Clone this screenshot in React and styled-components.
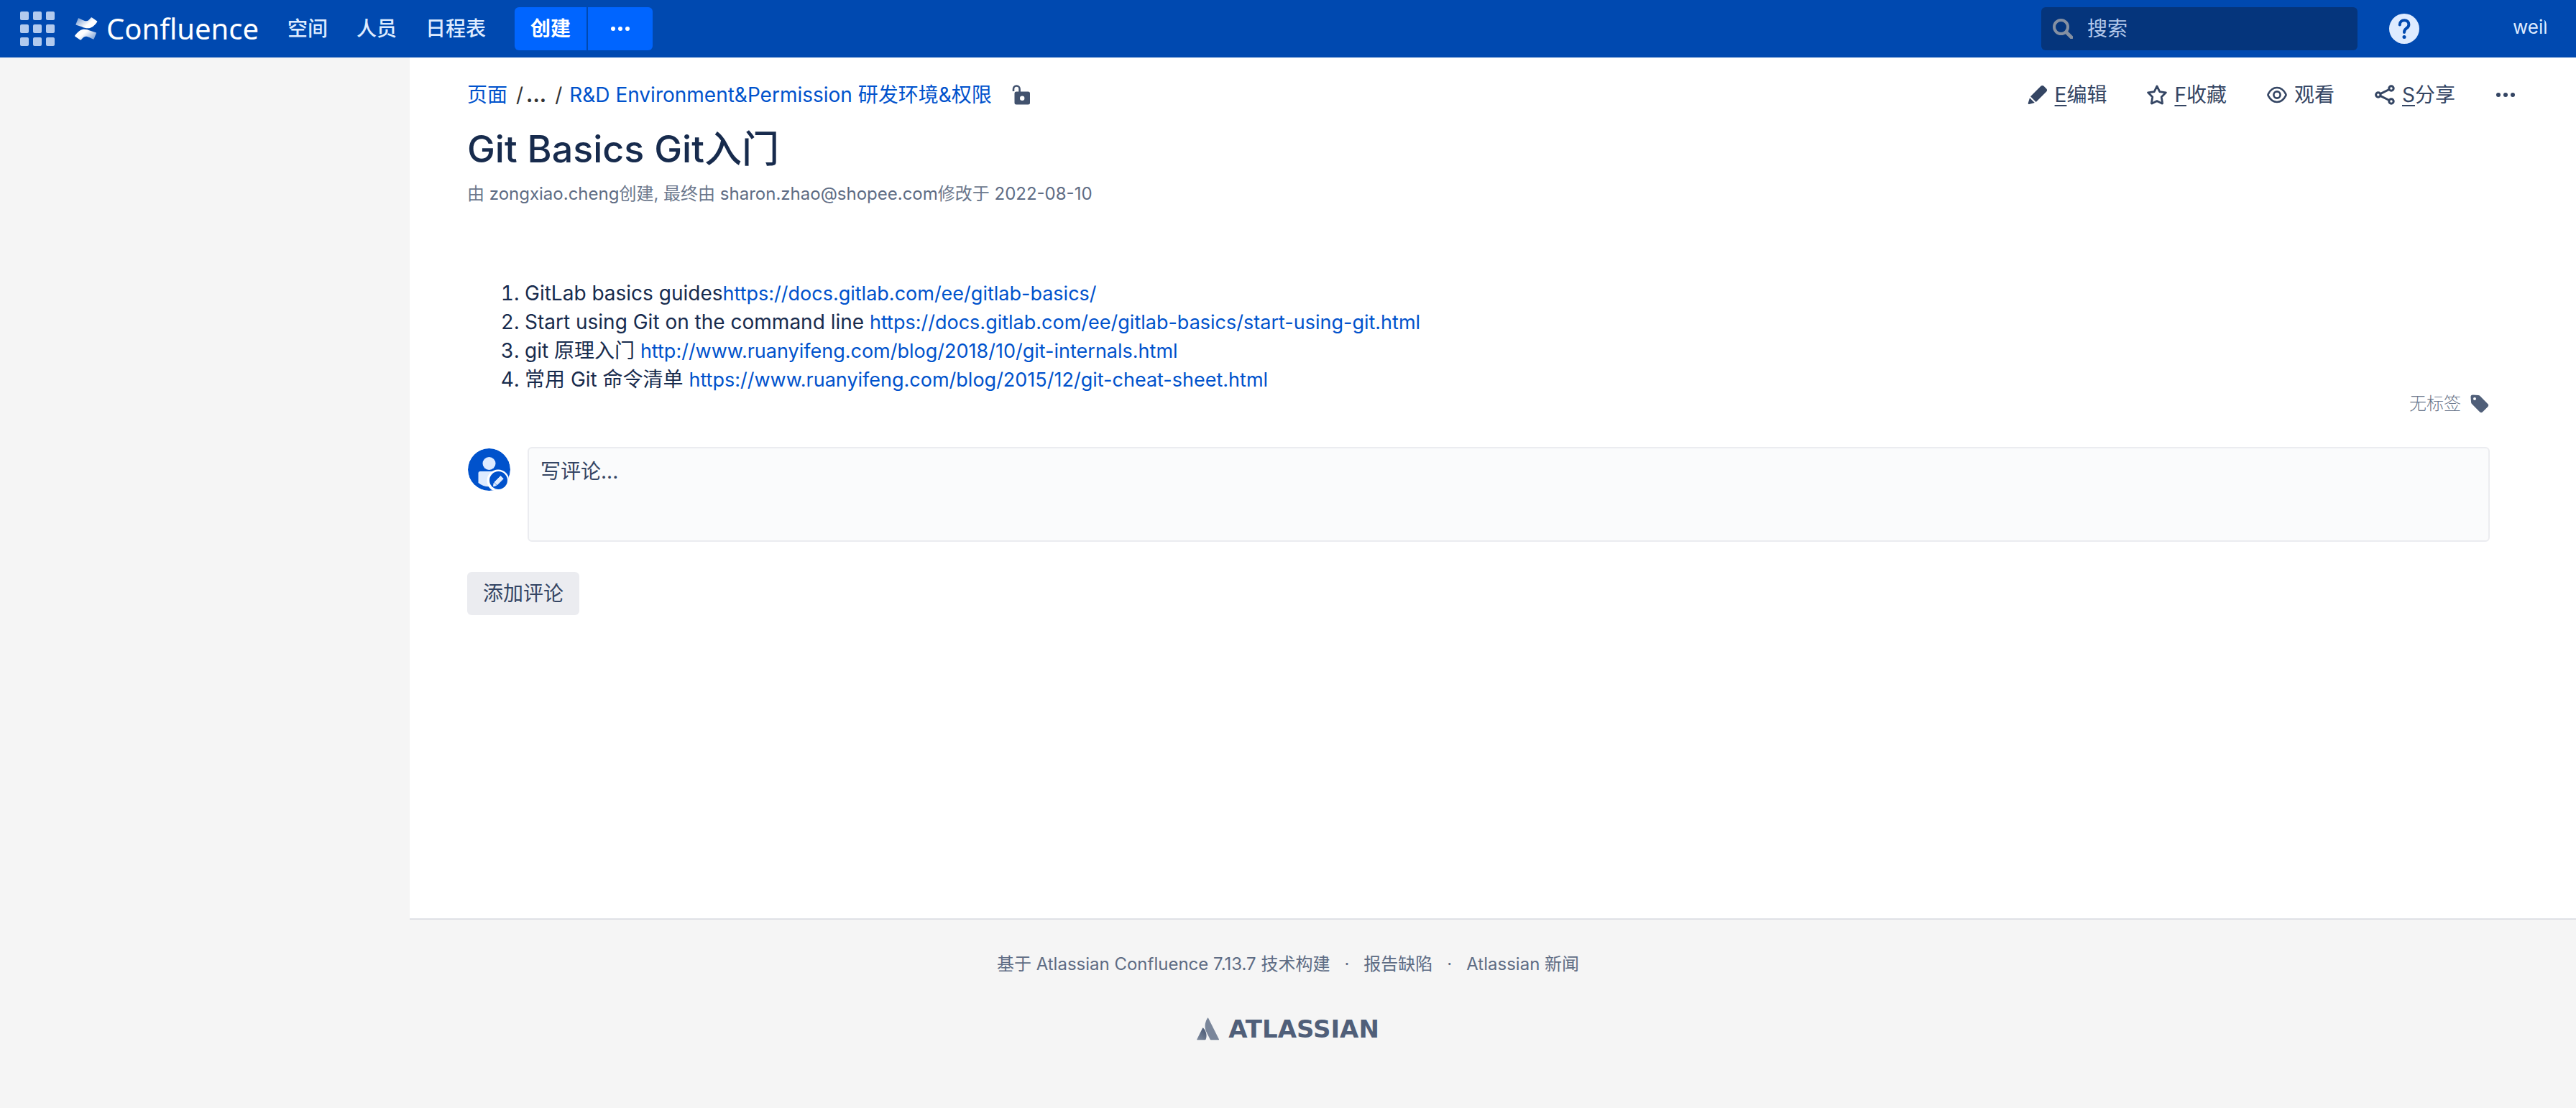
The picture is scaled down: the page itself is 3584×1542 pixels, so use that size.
import React from 'react';
import styled, { createGlobalStyle } from 'styled-components';

const sans = 'Inter, "Noto Sans CJK SC", sans-serif';

const GlobalStyle = createGlobalStyle`
  * { box-sizing: border-box; }
  html, body, #root { height: 100%; }
  body {
    margin: 0;
    background: #f5f5f5;
    color: #172b4d;
    font-family: ${sans};
    font-size: 28px;
    line-height: 40px;
  }
  a { color: #0052cc; text-decoration: none; }
  button, input, textarea { font: inherit; }
  button { cursor: pointer; }
  svg { display: block; flex: none; }
`;

const Page = styled.div`
  display: flex;
  flex-direction: column;
  min-height: 100%;
`;

const Header = styled.header`
  display: flex;
  align-items: center;
  height: 80px;
  flex: none;
  padding: 0 40px 0 28px;
  background: #0049b0;
  color: #deebff;
`;

const AppSwitcher = styled.button`
  display: grid;
  grid-template-columns: repeat(3, 12px);
  gap: 6px;
  padding: 0;
  border: 0;
  background: none;
`;

const Dot = styled.span`
  height: 12px;
  border-radius: 2px;
  background: #b2caee;
`;

const Logo = styled.a`
  display: flex;
  align-items: center;
  gap: 12px;
  margin-left: 28px;
  && { color: #fff; }
  font-family: "Noto Sans", sans-serif;
  font-size: 40px;
`;

const Nav = styled.nav`
  display: flex;
  gap: 40px;
  margin: 0 40px;
  a { color: #deebff; font-weight: 500; }
`;

const CreateGroup = styled.div`
  display: flex;
  gap: 2px;
`;

const CreateButton = styled.button`
  display: flex;
  align-items: center;
  justify-content: center;
  height: 60px;
  width: ${(p) => (p.$more ? '90px' : '100px')};
  padding: 0;
  border: 0;
  border-radius: ${(p) => (p.$more ? '0 6px 6px 0' : '6px 0 0 6px')};
  background: #0065ff;
  color: #fff;
  font-weight: 700;
`;

const Search = styled.label`
  display: flex;
  align-items: center;
  gap: 20px;
  width: 440px;
  height: 60px;
  margin-left: auto;
  padding: 0 16px;
  border-radius: 6px;
  background: #05357c;
  input {
    flex: 1;
    min-width: 0;
    padding: 0;
    border: 0;
    outline: 0;
    background: none;
    color: #b3cbef;
  }
  input::placeholder { color: #b3c8ea; opacity: 1; }
`;

const HelpButton = styled.button`
  margin-left: 44px;
  padding: 0;
  border: 0;
  background: none;
`;

const Profile = styled.a`
  width: 48px;
  height: 48px;
  margin-left: 130px;
  border-radius: 50%;
  overflow: hidden;
  white-space: nowrap;
  && { color: #deebff; }
  font-size: 26px;
  line-height: 44px;
`;

const Body = styled.div`
  display: flex;
  flex: none;
  min-height: 1200px;
`;

const Sidebar = styled.aside`
  width: 570px;
  flex: none;
`;

const Main = styled.main`
  flex: 1;
  min-width: 0;
  padding: 32px 120px 0 80px;
  border-bottom: 2px solid #dfe1e6;
  background: #fff;
`;

const TopRow = styled.div`
  display: flex;
  justify-content: space-between;
  align-items: center;
`;

const Crumbs = styled.nav`
  display: flex;
  align-items: center;
  color: #333;
  a { white-space: nowrap; }
`;

const Slash = styled.span`
  margin: 0 ${(p) => (p.$tight ? '4px' : '10px')} 0 12px;
`;

const CrumbMore = styled.button`
  padding: 0;
  border: 0;
  background: none;
  color: #333;
  font-weight: 700;
`;

const LockButton = styled.button`
  margin-left: 28px;
  padding: 0;
  border: 0;
  background: none;
`;

const Actions = styled.div`
  display: flex;
  align-items: center;
  gap: 56px;
  margin-right: -36px;
`;

const Action = styled.a`
  display: flex;
  align-items: center;
  gap: 10px;
  && { color: #344563; }
  u { text-underline-offset: 4px; text-decoration-thickness: 2px; }
`;

const MoreButton = styled.button`
  padding: 0;
  border: 0;
  background: none;
`;

const Title = styled.h1`
  margin: 24px 0 0;
  font-size: 52px;
  line-height: 64px;
  font-weight: 500;
`;

const Byline = styled.p`
  margin: 10px 0 0;
  color: #6b778c;
  font-size: 24px;
  line-height: 40px;
  a { color: #5e6c84; }
`;

const Links = styled.ol`
  margin: 98px 0 0;
  padding-left: 80px;
  a { font-size: 27px; line-height: 28px; }
`;

const Labels = styled.div`
  display: flex;
  justify-content: flex-end;
  align-items: center;
  gap: 12px;
  color: #6b778c;
  font-size: 24px;
  font-weight: 300;
  line-height: 28px;
`;

const CommentRow = styled.div`
  display: flex;
  gap: 24px;
  margin-top: 46px;
`;

const Avatar = styled.div`
  flex: none;
  padding-top: 2px;
`;

const CommentBox = styled.textarea`
  display: block;
  flex: 1;
  height: 132px;
  padding: 12px 16px;
  border: 2px solid #ebecf0;
  border-radius: 6px;
  outline: 0;
  resize: none;
  background: #fafbfc;
  &::placeholder { color: #344563; opacity: 1; }
`;

const AddButton = styled.button`
  height: 60px;
  margin-top: 42px;
  padding: 0 22px;
  border: 0;
  border-radius: 6px;
  background: #ebecf0;
  color: #344563;
`;

const Footer = styled.footer`
  display: flex;
  flex-direction: column;
  align-items: center;
  gap: 50px;
  padding: 42px 0;
  color: #5e6c84;
  font-size: 24px;
`;

const FooterList = styled.ul`
  display: flex;
  gap: 20px;
  margin: 0;
  padding: 0;
  list-style: none;
  a { color: #5e6c84; }
`;

const Atlassian = styled.a`
  display: flex;
  align-items: center;
  gap: 12px;
  && { color: #505f79; }
  font-family: "DejaVu Sans", sans-serif;
  font-size: 34px;
  font-weight: 700;
`;

const ConfluenceMark = () => (
  <svg width="32" height="32" viewBox="0 0 32 32" aria-hidden="true">
    <defs>
      <linearGradient id="cf-top" x1="0" y1="0" x2="1" y2="0.6">
        <stop offset="0" stopColor="#fff" stopOpacity="0.4" />
        <stop offset="0.7" stopColor="#fff" />
      </linearGradient>
      <linearGradient id="cf-bottom" x1="1" y1="1" x2="0" y2="0.4">
        <stop offset="0" stopColor="#fff" stopOpacity="0.4" />
        <stop offset="0.7" stopColor="#fff" />
      </linearGradient>
    </defs>
    <path fill="url(#cf-top)" d="M1.6 9.600 4.600 2c.3-.7.800-.8 1.400-.5l5.200 2.400c4.800 2.200 7 1.600 9.400-1.200L22.400.8c.5-.6 1-.6 1.600-.2l6.800 4.600c.6.400.7.900.2 1.500-7 9.900-13.400 10.100-21.200 6.500L2 10.800c-.6-.3-.7-.6-.4-1.200z" />
    <path fill="url(#cf-bottom)" d="M29.800 22.400 26.800 30c-.3.700-.8.800-1.400.5l-5.200-2.400c-4.800-2.200-7-1.600-9.400 1.200L9 31.200c-.5.600-1 .6-1.600.2L.6 26.800c-.6-.4-.7-.9-.2-1.500 7-9.900 13.400-10.100 21.200-6.500l7.800 2.400c.6.300.7.600.4 1.200z" />
  </svg>
);

const Ellipsis = ({ color }) => (
  <svg width="28" height="8" viewBox="0 0 28 8" fill={color} aria-hidden="true">
    <circle cx="4" cy="4" r="3" />
    <circle cx="14" cy="4" r="3" />
    <circle cx="24" cy="4" r="3" />
  </svg>
);

const SearchIcon = () => (
  <svg width="28" height="28" viewBox="0 0 28 28" fill="none" stroke="#8590a2" aria-hidden="true">
    <circle cx="11.500" cy="11.500" r="9.500" strokeWidth="4" />
    <path d="m19 19 7 7" strokeWidth="5" strokeLinecap="round" />
  </svg>
);

const HelpIcon = () => (
  <svg width="42" height="42" viewBox="0 0 42 42" aria-hidden="true">
    <circle cx="21" cy="21" r="21" fill="#deebff" />
    <path d="M14.800 15.500c0-3.800 2.600-6.300 6.300-6.300s6.300 2.300 6.300 6c0 2.700-1.500 4-3.300 5.200-2 1.400-3.100 2.400-3.100 5.600" fill="none" stroke="#0049b0" strokeWidth="4" strokeLinecap="round" />
    <circle cx="21" cy="32.500" r="2.500" fill="#0049b0" />
  </svg>
);

const LockIcon = () => (
  <svg width="26" height="28" viewBox="0 0 26 28" aria-hidden="true">
    <path d="M2 9V6c0-2.600 1.600-4.500 4.300-4.500S10.600 3.400 10.600 6v4" fill="none" stroke="#42526e" strokeWidth="2.600" />
    <path fillRule="evenodd" fill="#42526e" d="M6 9.500h16.500a2.500 2.500 0 0 1 2.500 2.500v13a2.500 2.500 0 0 1-2.500 2.500H6A2.500 2.500 0 0 1 3.500 25V12A2.500 2.500 0 0 1 6 9.500zM14.200 15.500a3.200 3.200 0 1 0 0 6.400 3.200 3.200 0 0 0 0-6.400z" />
  </svg>
);

const EditIcon = () => (
  <svg width="28" height="28" viewBox="0 0 28 28" fill="#344563" aria-hidden="true">
    <path d="M18.500 1.800c1.200-1.200 2.800-1.200 4 0l3.700 3.700c1.200 1.200 1.200 2.800 0 4L11.700 24 4 16.300z" />
    <path d="m3 18.200 6.800 6.800-7.600 2c-1 .2-1.700-.5-1.500-1.500z" />
  </svg>
);

const StarIcon = () => (
  <svg width="28" height="28" viewBox="0 0 28 28" fill="none" stroke="#344563" strokeWidth="2.800" strokeLinejoin="round" aria-hidden="true">
    <path d="m14 2 3.800 7.600 8.600 1.200-6.200 6.100 1.400 8.600q.1.700-.6.400L14 22.600l-7 3.300q-.7.300-.6-.4l1.400-8.600-6.200-6.100 8.600-1.200z" />
  </svg>
);

const WatchIcon = () => (
  <svg width="28" height="24" viewBox="0 0 28 24" fill="none" stroke="#344563" strokeWidth="2.600" aria-hidden="true">
    <path d="M14 2c5.600 0 9.800 4.100 12.200 8.800.4.800.4 1.600 0 2.400C23.800 17.900 19.600 22 14 22S4.200 17.900 1.800 13.200c-.4-.8-.4-1.600 0-2.400C4.200 6.100 8.400 2 14 2z" />
    <circle cx="14" cy="12" r="4.600" />
  </svg>
);

const ShareIcon = () => (
  <svg width="28" height="28" viewBox="0 0 28 28" fill="none" stroke="#344563" strokeWidth="3" aria-hidden="true">
    <circle cx="4.800" cy="14" r="3.200" />
    <circle cx="23" cy="5" r="3.200" />
    <circle cx="23" cy="23" r="3.200" />
    <path d="M7.700 12.600 20 6.500M7.700 15.400 20 21.500" />
  </svg>
);

const TagIcon = () => (
  <svg width="28" height="28" viewBox="0 0 28 28" aria-hidden="true">
    <path fillRule="evenodd" fill="#505f79" d="M4.500 1.500 12 2c1 .1 1.700.4 2.400 1.100l11 11.200c1.100 1.100 1.100 2.500 0 3.600l-7.500 7.600c-1.100 1.100-2.500 1.100-3.600 0L3.200 14.300c-.7-.7-1-1.400-1.100-2.400L1.500 4.500c-.1-1.900 1.100-3.100 3-3zM7 5a2 2 0 1 0 0 4 2 2 0 0 0 0-4z" />
  </svg>
);

const AvatarIcon = () => (
  <svg width="60" height="60" viewBox="0 0 60 60" aria-hidden="true">
    <defs>
      <clipPath id="avatar-clip"><circle cx="30.500" cy="29.500" r="29.500" /></clipPath>
    </defs>
    <g clipPath="url(#avatar-clip)">
      <circle cx="30.500" cy="29.500" r="29.500" fill="#0052cc" />
      <circle cx="30.500" cy="21" r="9" fill="#deebff" />
      <path d="M15.500 34.500c0-1.600.9-2.500 2.500-2.500h24c1.600 0 2.500.9 2.500 2.500V48c-8.500 7-20.500 7-29 0z" fill="#deebff" />
      <circle cx="43" cy="45" r="15.500" fill="#fff" />
    </g>
    <circle cx="43.500" cy="44.500" r="12.500" fill="#0052cc" />
    <path d="m46.500 38.600 3.700 3.700-8.600 8.600-3.700-3.700zM37.200 48l3.500 3.500-4.200 1.200z" fill="#deebff" stroke="#deebff" strokeLinejoin="round" />
  </svg>
);

const AtlassianMark = () => (
  <svg width="32" height="32" viewBox="0 0 32 32" aria-hidden="true">
    <defs>
      <linearGradient id="atl" x1="0.800" y1="0.200" x2="0.300" y2="1">
        <stop offset="0" stopColor="#505f79" />
        <stop offset="1" stopColor="#7a869a" />
      </linearGradient>
    </defs>
    <path fill="url(#atl)" d="M9.300 14.800c-.4-.5-1-.5-1.300.1L.4 30.200c-.3.600 0 1.100.7 1.100h10.600c.4 0 .6-.2.800-.5 2.300-4.700.9-11.900-3.200-16z" />
    <path fill="#7a869a" d="M14.900.9c-4.300 6.700-4 14.200-1.200 19.800l5.100 10.100c.2.300.4.500.8.500h10.600c.7 0 1-.5.700-1.100L16.200.9c-.3-.6-.9-.6-1.300 0z" />
  </svg>
);

const links = [
  { text: 'GitLab basics guides', url: 'https://docs.gitlab.com/ee/gitlab-basics/' },
  { text: 'Start using Git on the command line ', url: 'https://docs.gitlab.com/ee/gitlab-basics/start-using-git.html' },
  { text: 'git 原理入门 ', url: 'http://www.ruanyifeng.com/blog/2018/10/git-internals.html' },
  { text: '常用 Git 命令清单 ', url: 'https://www.ruanyifeng.com/blog/2015/12/git-cheat-sheet.html' },
];

export default function App() {
  return (
    <Page lang="zh-CN">
      <GlobalStyle />
      <Header>
        <AppSwitcher aria-label="应用程序">
          {Array.from({ length: 9 }, (_, i) => <Dot key={i} />)}
        </AppSwitcher>
        <Logo href="#"><ConfluenceMark />Confluence</Logo>
        <Nav>
          <a href="#">空间</a>
          <a href="#">人员</a>
          <a href="#">日程表</a>
        </Nav>
        <CreateGroup>
          <CreateButton>创建</CreateButton>
          <CreateButton $more aria-label="更多创建"><Ellipsis color="#fff" /></CreateButton>
        </CreateGroup>
        <Search>
          <SearchIcon />
          <input type="text" placeholder="搜索" aria-label="搜索" />
        </Search>
        <HelpButton aria-label="帮助"><HelpIcon /></HelpButton>
        <Profile href="#">weil</Profile>
      </Header>
      <Body>
        <Sidebar />
        <Main>
          <TopRow>
            <Crumbs>
              <a href="#">页面</a>
              <Slash $tight>/</Slash>
              <CrumbMore>...</CrumbMore>
              <Slash>/</Slash>
              <a href="#">R&amp;D Environment&amp;Permission 研发环境&amp;权限</a>
              <LockButton aria-label="限制"><LockIcon /></LockButton>
            </Crumbs>
            <Actions>
              <Action href="#"><EditIcon /><span><u>E</u>编辑</span></Action>
              <Action href="#"><StarIcon /><span><u>F</u>收藏</span></Action>
              <Action href="#"><WatchIcon /><span>观看</span></Action>
              <Action href="#"><ShareIcon /><span><u>S</u>分享</span></Action>
              <MoreButton aria-label="更多"><Ellipsis color="#344563" /></MoreButton>
            </Actions>
          </TopRow>
          <Title>Git Basics Git入门</Title>
          <Byline>
            由 <a href="#">zongxiao.cheng</a>创建, 最终由 <a href="#">sharon.zhao@shopee.com</a>修改于 <a href="#">2022-08-10</a>
          </Byline>
          <Links>
            {links.map((l) => (
              <li key={l.url}>{l.text}<a href={l.url}>{l.url}</a></li>
            ))}
          </Links>
          <Labels>无标签<TagIcon /></Labels>
          <CommentRow>
            <Avatar><AvatarIcon /></Avatar>
            <CommentBox placeholder="写评论..." aria-label="写评论" />
          </CommentRow>
          <AddButton>添加评论</AddButton>
        </Main>
      </Body>
      <Footer>
        <FooterList>
          <li>基于 <a href="#">Atlassian Confluence</a> 7.13.7 技术构建</li>
          <li>·</li>
          <li><a href="#">报告缺陷</a></li>
          <li>·</li>
          <li><a href="#">Atlassian 新闻</a></li>
        </FooterList>
        <Atlassian href="#"><AtlassianMark />ATLASSIAN</Atlassian>
      </Footer>
    </Page>
  );
}
